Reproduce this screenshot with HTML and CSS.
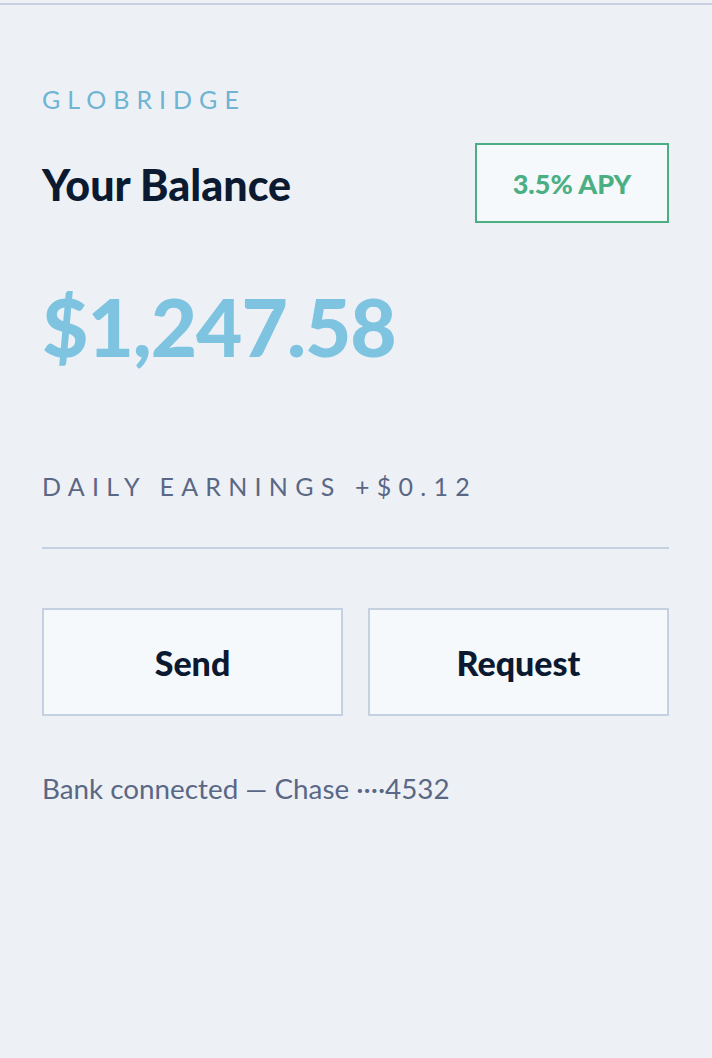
FILE: index.html
```html
<!DOCTYPE html>
<html>
<head>
<meta charset="utf-8">
<link rel="stylesheet" href="styles.css">
</head>
<body>
<div class="page">
  <div class="brand">GLOBRIDGE</div>
  <div class="head-row">
    <h1 class="title">Your Balance</h1>
    <div class="apy">3.5% APY</div>
  </div>
  <div class="amount">$1,247.58</div>
  <div class="daily">DAILY EARNINGS +$0.12</div>
  <hr class="divider">
  <div class="actions">
    <button class="btn">Send</button>
    <button class="btn">Request</button>
  </div>
  <div class="bank">Bank connected — Chase ····4532</div>
</div>
</body>
</html>
```
FILE: styles.css
```css
html, body {
  margin: 0;
  padding: 0;
  background: #edf1f6;
}
body {
  padding-top: 3px;
  font-family: Lato, "Open Sans", sans-serif;
}
.page {
  border-top: 2px solid #c8d2e3;
  padding: 79px 43px 0 42px;
  min-height: 1000px;
}
.brand {
  font-size: 25px;
  line-height: 30px;
  letter-spacing: 0.28em;
  color: #6fb4d2;
}
.head-row {
  display: flex;
  justify-content: space-between;
  align-items: center;
  margin-top: 29px;
}
.title {
  margin: 0;
  font-size: 43px;
  font-weight: 900;
  color: #0b1a30;
  line-height: 44px;
  padding-top: 4px;
}
.apy {
  width: 190px;
  height: 76px;
  border: 2px solid #4caf83;
  background: #f5f9fc;
  color: #4caf83;
  font-weight: 900;
  font-size: 27px;
  display: flex;
  align-items: center;
  justify-content: center;
}
.amount {
  margin-top: 58px;
  font-size: 80px;
  font-weight: 900;
  line-height: 90px;
  color: #7ec4e0;
  letter-spacing: -1px;
}
.daily {
  margin-top: 100px;
  font-size: 25px;
  line-height: 30px;
  letter-spacing: 0.29em;
  color: #5a6785;
}
.divider {
  margin: 46px 0 0;
  border: 0;
  border-top: 2px solid #c5d0e0;
  height: 0;
}
.actions {
  display: flex;
  gap: 25px;
  margin-top: 59px;
}
.btn {
  flex: 1;
  height: 108px;
  border: 2px solid #c5d0e0;
  background: #f5f9fc;
  font-family: Lato, "Open Sans", sans-serif;
  font-size: 34px;
  font-weight: 900;
  color: #0b1a30;
  padding: 0;
}
.bank {
  margin-top: 58px;
  font-size: 27.8px;
  line-height: 30px;
  color: #5a6785;
}
```
